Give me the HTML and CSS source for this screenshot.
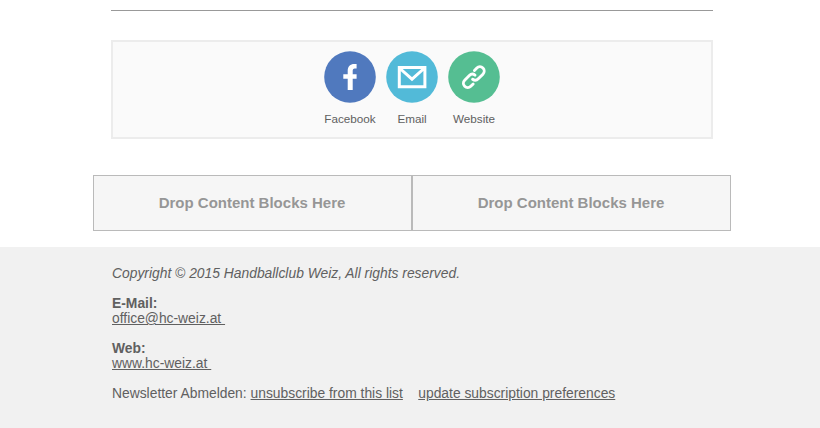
FILE: index.html
```html
<!DOCTYPE html>
<html lang="de">
<head>
<meta charset="utf-8">
<title>Handballclub Weiz Newsletter</title>
<link rel="stylesheet" href="styles.css">
</head>
<body>
<hr class="divider">
<section class="social">
  <a class="social-item"><svg class="social-icon" viewBox="0 0 52 52"><circle cx="26" cy="26" r="25.8" fill="#5079be"/><path fill="#fff" d="M23.7 39V27.8H19.3V23.3H23.7V20C23.7 15.5 26.3 13 30.3 13H32.6V17.4H30.8C29.2 17.4 28.7 18.3 28.7 20V23.3H32.6V27.8H28.7V39Z"/></svg><span>Facebook</span></a>
  <a class="social-item"><svg class="social-icon" viewBox="0 0 52 52"><circle cx="26" cy="26" r="25.8" fill="#52bad8"/><path fill="none" stroke="#fff" stroke-width="3" d="M13.3 16.4H38.9V35.8H13.3ZM14 17.5L26 28.2L38 17.5"/></svg><span>Email</span></a>
  <a class="social-item"><svg class="social-icon" viewBox="0 0 52 52"><circle cx="26" cy="26" r="25.8" fill="#55be92"/><g transform="translate(25.8 26.2) rotate(-45)" fill="none" stroke="#fff" stroke-width="2.9" stroke-linecap="round"><path d="M-5.2 4.3H-8.6A4.3 4.3 0 0 1 -8.6 -4.3H-2A4.3 4.3 0 0 1 2.3 -.6"/><path d="M5.2 -4.3H8.6A4.3 4.3 0 0 1 8.6 4.3H2A4.3 4.3 0 0 1 -2.3 .6"/></g></svg><span>Website</span></a>
</section>
<section class="drop-zones">
  <div class="drop-zone">Drop Content Blocks Here</div>
  <div class="drop-zone">Drop Content Blocks Here</div>
</section>
<footer class="footer">
  <p><em>Copyright © 2015 Handballclub Weiz, All rights reserved.</em></p>
  <p><strong>E-Mail:</strong><br><a>office@hc-weiz.at&nbsp;</a></p>
  <p><strong>Web:</strong><br><a>www.hc-weiz.at&nbsp;</a></p>
  <p>Newsletter Abmelden: <a>unsubscribe from this list</a>&nbsp;&nbsp;&nbsp; <a>update subscription preferences</a></p>
</footer>
</body>
</html>
```
FILE: styles.css
```css
* { box-sizing: border-box; }
body {
  margin: 0;
  height: 428px;
  display: flex;
  flex-direction: column;
  background: #fff;
  font-family: "Liberation Sans", Arial, sans-serif;
  overflow: hidden;
}
.divider {
  width: 602px;
  height: 1px;
  margin: 10px 0 29px 111px;
  border: 0;
  background: #999;
}
.social {
  width: 602px;
  height: 99px;
  margin-left: 111px;
  padding-top: 9px;
  display: flex;
  justify-content: center;
  gap: 10px;
  border: 2px solid #ececec;
  background: #fafafa;
}
.social-item {
  width: 52px;
  display: flex;
  flex-direction: column;
  align-items: center;
  gap: 9px;
  font-size: 11.7px;
  line-height: 14px;
  color: #606060;
  white-space: nowrap;
}
.social-icon { width: 52px; height: 52px; flex: none; }
.drop-zones {
  display: flex;
  width: 638px;
  height: 56px;
  margin: 36px 0 16px 92.5px;
}
.drop-zone {
  flex: 1;
  display: flex;
  align-items: center;
  justify-content: center;
  padding-bottom: 1px;
  border: 1px solid #bababa;
  background: #f6f6f6;
  color: #969696;
  font-size: 15px;
  font-weight: bold;
}
.footer {
  flex: 1;
  padding: 19px 0 0 112px;
  background: #f1f1f1;
  color: #606060;
  font-size: 13.85px;
  line-height: 15px;
}
.footer p { margin: 0 0 15px; }
.footer a { text-decoration: underline; }
```
